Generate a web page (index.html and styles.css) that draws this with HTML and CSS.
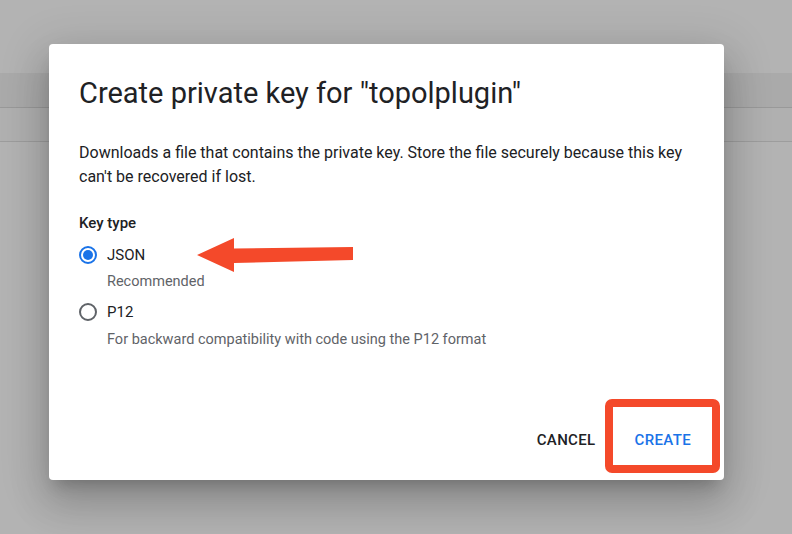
FILE: index.html
```html
<!DOCTYPE html>
<html>
<head>
<meta charset="utf-8">
<link rel="stylesheet" href="styles.css">
</head>
<body>
<div class="page">
  <div class="band"></div>
  <div class="row"></div>
  <div class="rest"></div>
</div>

<div class="dialog">
  <h1 class="title">Create private key for "topolplugin"</h1>
  <p class="desc">Downloads a file that contains the private key. Store the file securely because this key can't be recovered if lost.</p>
  <div class="label">Key type</div>
  <div class="option">
    <span class="radio checked"><span class="dot"></span></span>
    <span class="opt-name">JSON</span>
  </div>
  <div class="hint">Recommended</div>
  <div class="option option-next">
    <span class="radio"></span>
    <span class="opt-name">P12</span>
  </div>
  <div class="hint hint-last">For backward compatibility with code using the P12 format</div>
  <div class="actions">
    <button class="btn">CANCEL</button>
    <button class="btn primary">CREATE</button>
  </div>
</div>

<svg class="arrow" width="170" height="50" viewBox="190 230 170 50">
  <polygon points="197,255 234,238 234,248.5 353,247 353,260 234,263 234,272" fill="#f4492a"/>
</svg>
<div class="highlight"></div>
</body>
</html>
```

FILE: styles.css
```css
* { box-sizing: border-box; }
html, body { margin: 0; padding: 0; }
body {
  width: 792px;
  height: 534px;
  overflow: hidden;
  background: #b3b3b3;
  font-family: Roboto, "Noto Sans", Arial, sans-serif;
  position: relative;
}
.page {
  padding-top: 73px;
}
.band {
  height: 35px;
  background: #aaaaaa;
  border-bottom: 1px solid #999999;
}
.row {
  height: 34px;
  background: #b0b0b0;
  border-bottom: 1px solid #9d9d9d;
}
.rest {
  height: 400px;
  background: #b3b3b3;
}
.dialog {
  position: absolute;
  left: 49px;
  top: 44px;
  width: 675px;
  height: 436px;
  background: #fff;
  border-radius: 4px;
  box-shadow: 0 11px 15px -7px rgba(0,0,0,.2), 0 24px 38px 3px rgba(0,0,0,.14), 0 9px 46px 8px rgba(0,0,0,.12);
  padding: 31px 30px 0 30px;
  display: flex;
  flex-direction: column;
  color: #202124;
}
.title {
  margin: 0;
  font-size: 29px;
  line-height: 36px;
  font-weight: 400;
  color: #202124;
}
.desc {
  margin: 30px 0 0 0;
  font-size: 16px;
  line-height: 24px;
  color: #202124;
}
.label {
  margin-top: 22px;
  font-size: 15px;
  line-height: 24px;
  font-weight: 500;
}
.option {
  display: flex;
  align-items: center;
  gap: 10px;
  height: 24px;
  margin-top: 8px;
}
.option-next { margin-top: 6px; }
.opt-name {
  font-size: 15px;
  line-height: 24px;
}
.radio {
  width: 18px;
  height: 18px;
  border-radius: 50%;
  border: 2px solid #5f6368;
  display: flex;
  align-items: center;
  justify-content: center;
}
.radio.checked { border-color: #1a73e8; }
.dot {
  width: 10px;
  height: 10px;
  border-radius: 50%;
  background: #1a73e8;
}
.hint {
  margin-left: 28px;
  margin-top: 3px;
  font-size: 14.5px;
  line-height: 24px;
  color: #5f6368;
}
.hint-last { margin-top: 4px; }
.actions {
  margin-top: auto;
  margin-right: -7px;
  display: flex;
  justify-content: flex-end;
  gap: 19px;
  padding: 0 0 21px 0;
}
.btn {
  background: none;
  border: 0;
  font-family: inherit;
  font-size: 15px;
  font-weight: 500;
  letter-spacing: 0.35px;
  color: #202124;
  padding: 0 10px;
  height: 38px;
}
.btn.primary { color: #1a73e8; }
.arrow {
  position: absolute;
  left: 190px;
  top: 230px;
}
.highlight {
  position: absolute;
  left: 605px;
  top: 399px;
  width: 115px;
  height: 74px;
  border: 8px solid #f4492a;
  border-radius: 7px;
}
```
